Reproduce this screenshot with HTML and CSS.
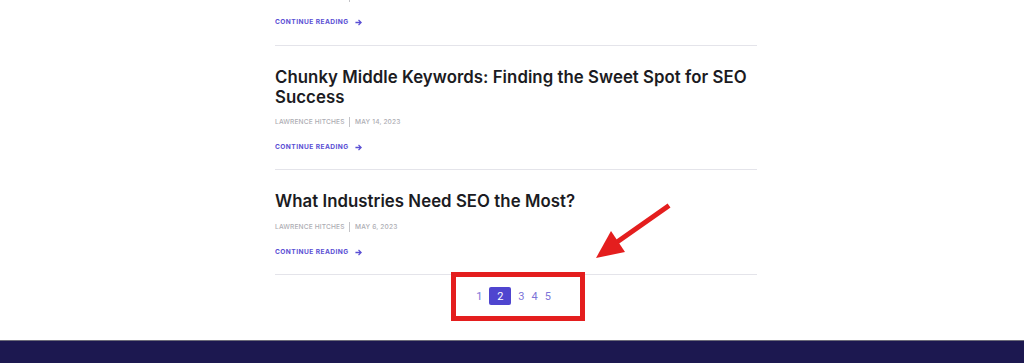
FILE: index.html
```html
<!DOCTYPE html>
<html lang="en">
<head>
    <meta charset="UTF-8">
    <meta name="viewport" content="width=device-width, initial-scale=1.0">
    <title>Blog - Page 2</title>
    <link rel="stylesheet" href="styles.css">
</head>
<body>
    <div class="page">
        <main class="posts">
            <article class="post post-partial">
                <div class="meta"><span>Lawrence Hitches</span><i class="bar"></i><span>May 17, 2023</span></div>
                <a class="more" href="#">Continue Reading
                    <svg width="7" height="7" viewBox="0 0 8 8"><path d="M0.5 4H7M4 1l3 3-3 3" fill="none" stroke="currentColor" stroke-width="1.5"/></svg>
                </a>
            </article>
            <article class="post">
                <h2>Chunky Middle Keywords: Finding the Sweet Spot for SEO Success</h2>
                <div class="meta"><span>Lawrence Hitches</span><i class="bar"></i><span>May 14, 2023</span></div>
                <a class="more" href="#">Continue Reading
                    <svg width="7" height="7" viewBox="0 0 8 8"><path d="M0.5 4H7M4 1l3 3-3 3" fill="none" stroke="currentColor" stroke-width="1.5"/></svg>
                </a>
            </article>
            <article class="post">
                <h2>What Industries Need SEO the Most?</h2>
                <div class="meta"><span>Lawrence Hitches</span><i class="bar"></i><span>May 6, 2023</span></div>
                <a class="more" href="#">Continue Reading
                    <svg width="7" height="7" viewBox="0 0 8 8"><path d="M0.5 4H7M4 1l3 3-3 3" fill="none" stroke="currentColor" stroke-width="1.5"/></svg>
                </a>
            </article>
            <nav class="pagination">
                <a href="#">1</a>
                <span class="current">2</span>
                <a href="#">3</a>
                <a href="#">4</a>
                <a href="#">5</a>
                <div class="highlight"></div>
            </nav>
        </main>
        <svg class="pointer" width="90" height="70" viewBox="0 0 90 70">
            <path d="M77 10L27 45" stroke="#e41e1e" stroke-width="5" stroke-linecap="square"/>
            <polygon points="6,61 21,34 35,55" fill="#e41e1e"/>
        </svg>
    </div>
    <footer class="footer"></footer>
</body>
</html>
```

FILE: styles.css
```css
body {
    margin: 0;
    background: #fff;
    font-family: "Inter", "Open Sans", sans-serif;
    overflow: hidden;
}

.page {
    position: relative;
}

.posts {
    width: 490px;
    box-sizing: border-box;
    padding-left: 8px;
    margin: -8px auto 0;
}

.post {
    padding: 21px 0 17px;
    border-bottom: 1px solid #e4e4ea;
}

.post-partial {
    padding-top: 0;
    padding-bottom: 18px;
}

.post h2 {
    margin: 0 0 10px;
    font-size: 16.8px;
    line-height: 20px;
    font-weight: 600;
    color: #1b1b22;
    letter-spacing: 0.05px;
}

.post:nth-child(3) h2 {
    margin-bottom: 11px;
}

.meta {
    display: flex;
    align-items: center;
    height: 10px;
    font-size: 6.6px;
    font-weight: 500;
    text-transform: uppercase;
    color: #adadb3;
    letter-spacing: 0.15px;
}

.bar {
    width: 1.5px;
    height: 10px;
    background: #c4c4c8;
    margin: 0 5px 0 4px;
}

.more {
    display: flex;
    align-items: center;
    gap: 6px;
    height: 10px;
    margin-top: 15px;
    font-size: 6.6px;
    font-weight: 700;
    letter-spacing: 0.45px;
    text-transform: uppercase;
    text-decoration: none;
    color: #5a4fd4;
}

.pagination {
    position: relative;
    display: flex;
    justify-content: center;
    align-items: center;
    gap: 7px;
    height: 18px;
    padding-right: 5px;
    margin: 12px 0 35px;
    font-family: "Roboto", sans-serif;
    font-size: 11px;
}

.pagination a {
    color: #7c74d8;
    text-decoration: none;
}

.pagination .current {
    width: 22px;
    height: 18px;
    display: flex;
    align-items: center;
    justify-content: center;
    background: #4f45cf;
    color: #fff;
    border-radius: 2px;
}

.highlight {
    position: absolute;
    left: 176px;
    top: -15px;
    width: 134px;
    height: 49px;
    box-sizing: border-box;
    border: 5px solid #e41e1e;
}

.pointer {
    position: absolute;
    left: 590px;
    top: 205px;
}

.footer {
    height: 200px;
    background: #1c1850;
    border-top: 1px solid #6b6b78;
}
```
